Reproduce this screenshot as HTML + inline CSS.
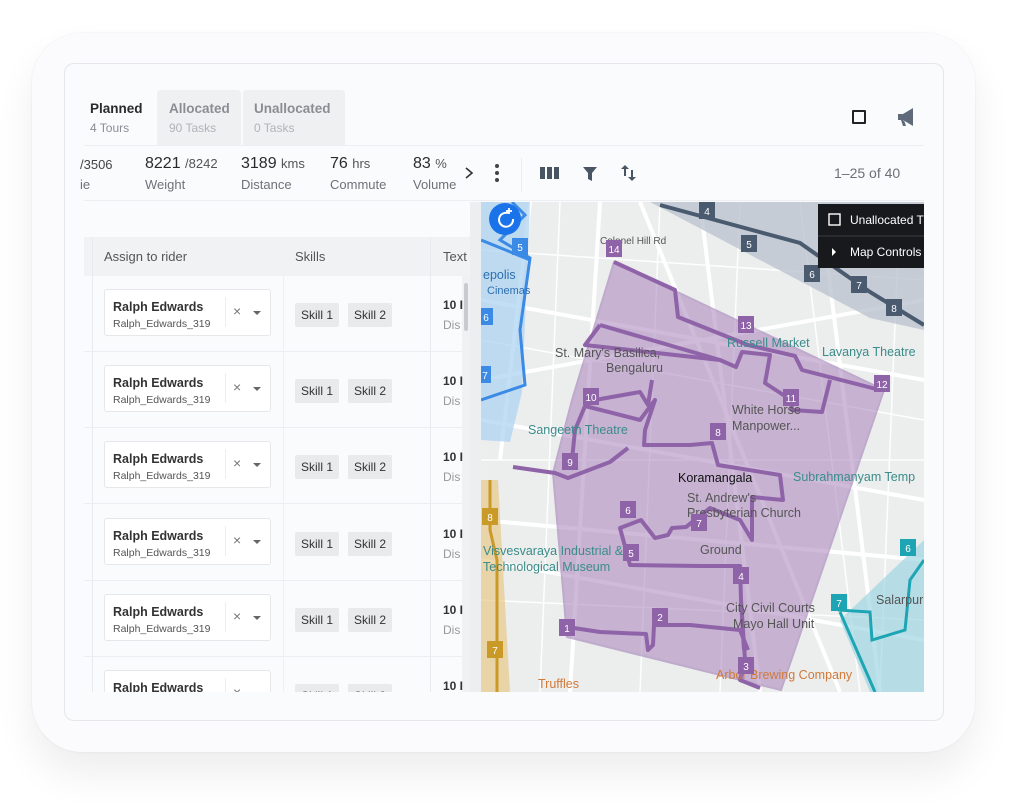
<!DOCTYPE html>
<html><head><meta charset="utf-8"><style>
*{margin:0;padding:0;box-sizing:border-box}
body{width:1024px;height:804px;background:#fff;position:relative;overflow:hidden;font-family:"Liberation Sans","DejaVu Sans",sans-serif;color:#222}
.abs{position:absolute}
.tablet{left:32px;top:33px;width:943px;height:719px;border-radius:50px;background:#fbfbfd;box-shadow:0 22px 40px rgba(0,0,0,.07),0 0 2px rgba(0,0,0,.08)}
.screen{left:64px;top:63px;width:880px;height:658px;border:1px solid #e4e6ea;border-radius:10px;background:#fafbfc;overflow:hidden}
.t1{font-size:13.5px;font-weight:bold;color:#2a2a2a}
.t2{font-size:12px;color:#8a8e94}
.val{font-size:16px;color:#2b2b2b}
.val small{font-size:13px;color:#555}
.lab{font-size:13px;color:#6d7278}
.sel{width:167px;height:47px;border:1px solid #e6e7ea;border-radius:3px;background:#fff}
.chip{height:24px;background:#e9eaec;border-radius:2px;font-size:12px;color:#333;line-height:24px;text-align:center;width:44px}
</style></head><body>
<div class="abs tablet"></div>
<div class="abs screen"></div>

<div class="abs" style="left:157px;top:90px;width:84px;height:55px;background:#eef0f2;border-radius:4px 4px 0 0"></div>
<div class="abs" style="left:243px;top:90px;width:102px;height:55px;background:#eef0f2;border-radius:4px 4px 0 0"></div>
<div class="abs t1" style="left:90px;top:101px">Planned</div>
<div class="abs t2" style="left:90px;top:121px">4 Tours</div>
<div class="abs t1" style="left:169px;top:101px;color:#8a8e94">Allocated</div>
<div class="abs t2" style="left:169px;top:121px;color:#b0b4b8">90 Tasks</div>
<div class="abs t1" style="left:254px;top:101px;color:#8a8e94">Unallocated</div>
<div class="abs t2" style="left:254px;top:121px;color:#b0b4b8">0 Tasks</div>
<div class="abs" style="left:84px;top:145px;width:840px;height:1px;background:#eceef1"></div>
<div class="abs" style="left:852px;top:110px;width:14px;height:14px;border:2px solid #222;border-radius:1px"></div>
<svg class="abs" style="left:896px;top:106px" width="22" height="22" viewBox="0 0 22 22"><path d="M2 8h5l10-6v18l-10-6H2z M5 14l2 6h3l-2-6z" fill="#5f6b7a"/></svg>

<div class="abs val" style="left:80px;top:157px;font-size:13px;color:#444">/3506</div>
<div class="abs lab" style="left:80px;top:177px">ie</div>
<div class="abs val" style="left:145px;top:155px">8221 <small>/8242</small></div>
<div class="abs lab" style="left:145px;top:177px">Weight</div>
<div class="abs val" style="left:241px;top:155px">3189 <small>kms</small></div>
<div class="abs lab" style="left:241px;top:177px">Distance</div>
<div class="abs val" style="left:330px;top:155px">76 <small>hrs</small></div>
<div class="abs lab" style="left:330px;top:177px">Commute</div>
<div class="abs val" style="left:413px;top:155px">83 <small>%</small></div>
<div class="abs lab" style="left:413px;top:177px;width:44px;overflow:hidden;white-space:nowrap">Volume</div>
<svg class="abs" style="left:462px;top:166px" width="14" height="14"><path d="M4 2l6 5-6 5" stroke="#333" stroke-width="1.6" fill="none"/></svg>
<svg class="abs" style="left:493px;top:163px" width="8" height="20"><circle cx="4" cy="3" r="2" fill="#444"/><circle cx="4" cy="10" r="2" fill="#444"/><circle cx="4" cy="17" r="2" fill="#444"/></svg>
<div class="abs" style="left:521px;top:158px;width:1px;height:34px;background:#eaecef"></div>
<svg class="abs" style="left:540px;top:167px" width="19" height="12"><rect x="0" y="0" width="5" height="12" fill="#4a5563"/><rect x="7" y="0" width="5" height="12" fill="#4a5563"/><rect x="14" y="0" width="5" height="12" fill="#4a5563"/></svg>
<svg class="abs" style="left:582px;top:166px" width="16" height="16"><path d="M1 1h14l-5 6v8l-4-2V7z" fill="#4a5563"/></svg>
<svg class="abs" style="left:620px;top:163px" width="18" height="20"><path d="M5 2l-4 4h3v7h2V6h3zM12 18l4-4h-3V7h-2v7H8z" fill="#4a5563"/></svg>
<div class="abs" style="left:834px;top:165px;font-size:14px;color:#6b7078">1–25 of 40</div>
<div class="abs" style="left:84px;top:200px;width:840px;height:1px;background:#eceef1"></div>

<div class="abs" style="left:84px;top:237px;width:386px;height:39px;background:#f1f2f4"></div>
<div class="abs" style="left:104px;top:249px;font-size:13px;color:#555">Assign to rider</div>
<div class="abs" style="left:295px;top:249px;font-size:13px;color:#555">Skills</div>
<div class="abs" style="left:443px;top:249px;font-size:13px;color:#555">Text I</div>
<div class="abs" style="left:92px;top:237px;width:1px;height:455px;background:#e8eaed"></div>
<div class="abs" style="left:283px;top:276px;width:1px;height:416px;background:#eef0f2"></div>
<div class="abs" style="left:430px;top:237px;width:1px;height:455px;background:#e8eaed"></div>
<div class="abs" style="left:462px;top:276px;width:8px;height:416px;background:#f0f1f3"></div>
<div class="abs" style="left:464px;top:283px;width:4px;height:48px;background:#c8cbcf;border-radius:2px"></div>
<div class="abs" style="left:470px;top:202px;width:11px;height:490px;background:#eceef0"></div>

<div id="rows"></div>
<script>
var h='';[276,352,428,505,581,657].forEach(function(t){
if(t+75<692)h+='<div class="abs" style="left:84px;top:'+(t+75)+'px;width:378px;height:1px;background:#eceef1"></div>';
h+='<div class="abs sel" style="left:104px;top:'+(t+13)+'px"></div>';
h+='<div class="abs" style="left:113px;top:'+(t+24)+'px;font-size:12.5px;font-weight:bold;color:#333">Ralph Edwards</div>';
h+='<div class="abs" style="left:113px;top:'+(t+42)+'px;font-size:10.5px;color:#555">Ralph_Edwards_319</div>';
h+='<div class="abs" style="left:225px;top:'+(t+21)+'px;width:1px;height:30px;background:#eee"></div>';
h+='<div class="abs" style="left:233px;top:'+(t+27)+'px;font-size:14px;color:#777">×</div>';
h+='<div class="abs" style="left:253px;top:'+(t+35)+'px;border:4px solid transparent;border-top:4px solid #666"></div>';
h+='<div class="abs chip" style="left:295px;top:'+(t+27)+'px">Skill 1</div>';
h+='<div class="abs chip" style="left:348px;top:'+(t+27)+'px">Skill 2</div>';
h+='<div class="abs" style="left:443px;top:'+(t+22)+'px;font-size:12px;font-weight:bold;color:#333">10 I</div>';
h+='<div class="abs" style="left:443px;top:'+(t+42)+'px;font-size:12px;color:#999">Dis</div>';
});document.getElementById('rows').innerHTML=h;
</script>
<div class="abs" style="left:84px;top:692px;width:400px;height:28px;background:#fafbfc"></div>

<svg class="abs" style="left:481px;top:202px" width="443" height="490" viewBox="481 202 443 490">
<rect x="481" y="202" width="443" height="490" fill="#eceded"/>
<g stroke="#fff" stroke-width="4" fill="none">
<path d="M530 202L500 460M600 202L570 692M481 300L924 380M481 420L924 500M481 560L924 640M700 202L760 692M640 202L840 692M481 380L924 300M820 202L880 692M481 520L924 560"/>
</g>
<g stroke="#fff" stroke-width="1.5" fill="none" opacity=".9">
<path d="M481 250L924 280M481 340L924 420M481 460L924 460M481 600L924 620M560 202L540 692M660 202L640 692M740 202L720 692M800 202L860 692M900 202L880 692"/>
</g>
<polygon points="650,202 924,202 924,330 870,318" fill="#b8c0cc" opacity=".75"/>
<path d="M660 205L800 243L870 292L924 325" stroke="#4a5b70" stroke-width="4" fill="none"/>
<polygon points="481,202 530,202 522,392 510,442 481,440" fill="#a9d2f2" opacity=".7"/>
<path d="M512 202L525 215L500 240L530 258L520 330L525 385L481 400M481 240L530 260" stroke="#3b8ae6" stroke-width="3" fill="none"/>
<polygon points="481,480 498,480 510,692 481,692" fill="#e8c98a" opacity=".7"/>
<path d="M490 480V530L497 560V692" stroke="#c99a27" stroke-width="3" fill="none"/>
<polygon points="924,540 840,620 870,692 924,692" fill="#9fd6e2" opacity=".7"/>
<path d="M838 610L870 612L872 640L905 630L910 580L924 560M840 612L875 692" stroke="#1ea5b3" stroke-width="3" fill="none"/>
<polygon points="614,262 884,390 781,690 567,637 553,473 572,400" fill="#a983bd" opacity=".55" stroke="#9a75b0" stroke-width="2"/>
<path d="M614 262L675 290L678 317L748 345L795 356L802 370L880 390M600 325L585 345L720 360L736 367L742 352L770 355L767 372L765 383L791 400L792 410L822 412L830 380M600 325L720 360M595 400L640 392L648 405L652 380M571 470L575 430L585 406L640 420L655 400L645 430L644 445L690 445L712 443L718 465L780 475L783 500L752 497L752 540L740 520L710 508L686 527L672 528L668 535L655 538L641 520L620 528L630 565L700 566L740 566L741 600L745 660L740 680L760 688M513 467L555 473L568 478L610 462L628 448M567 627L600 632L646 634L648 650L653 645L654 625L690 625L740 630L748 650M741 600L744 650" stroke="#8f63a8" stroke-width="4" fill="none" stroke-linejoin="round"/>
<g font-family="Liberation Sans,sans-serif" font-size="12.5" fill="#555">
<text x="555" y="357">St. Mary's Basilica,</text><text x="606" y="372">Bengaluru</text>
<text x="678" y="482" fill="#111">Koramangala</text>
<text x="732" y="414">White Horse</text><text x="732" y="430">Manpower...</text>
<text x="687" y="502">St. Andrew's</text><text x="687" y="517">Presbyterian Church</text>
<text x="700" y="554">Ground</text>
<text x="726" y="612">City Civil Courts</text><text x="733" y="628">Mayo Hall Unit</text>
<text x="793" y="481" fill="#3a8c8a">Subrahmanyam Temp</text>
<text x="822" y="356" fill="#3a8c8a">Lavanya Theatre</text>
<text x="727" y="347" fill="#3a8c8a">Russell Market</text>
<text x="528" y="434" fill="#3a8c8a">Sangeeth Theatre</text>
<text x="483" y="555" fill="#3a8c8a">Visvesvaraya Industrial &amp;</text><text x="483" y="571" fill="#3a8c8a">Technological Museum</text>
<text x="483" y="279" fill="#2d6fb0">epolis</text><text x="487" y="294" fill="#2d6fb0" font-size="11">Cinemas</text>
<text x="716" y="679" fill="#d07a3a">Arbor Brewing Company</text>
<text x="538" y="688" fill="#d07a3a">Truffles</text>
<text x="876" y="604">Salarpur</text>
<text x="600" y="244" font-size="10">Colonel Hill Rd</text>
</g>
<g font-family="Liberation Sans,sans-serif" font-size="10" fill="#fff" text-anchor="middle">
<g fill="#8f63a8"><rect x="606" y="240" width="16" height="17"/><rect x="738" y="316" width="16" height="17"/><rect x="874" y="375" width="16" height="17"/><rect x="783" y="389" width="16" height="17"/><rect x="583" y="388" width="16" height="17"/><rect x="710" y="423" width="16" height="17"/><rect x="562" y="453" width="16" height="17"/><rect x="620" y="501" width="16" height="17"/><rect x="691" y="514" width="16" height="17"/><rect x="623" y="544" width="16" height="17"/><rect x="733" y="567" width="16" height="17"/><rect x="652" y="608" width="16" height="17"/><rect x="559" y="619" width="16" height="17"/><rect x="738" y="657" width="16" height="17"/></g>
<g fill="#4a5b70"><rect x="699" y="202" width="16" height="17"/><rect x="741" y="235" width="16" height="17"/><rect x="804" y="265" width="16" height="17"/><rect x="851" y="276" width="16" height="17"/><rect x="886" y="299" width="16" height="17"/></g>
<g fill="#3b8ae6"><rect x="512" y="238" width="16" height="17"/><rect x="481" y="308" width="12" height="17"/><rect x="481" y="366" width="10" height="17"/></g>
<g fill="#c99a27"><rect x="482" y="508" width="16" height="17"/><rect x="487" y="641" width="16" height="17"/></g>
<g fill="#1ea5b3"><rect x="900" y="539" width="16" height="17"/><rect x="831" y="594" width="16" height="17"/></g>
<text x="614" y="253">14</text><text x="746" y="329">13</text><text x="882" y="388">12</text><text x="791" y="402">11</text><text x="591" y="401">10</text><text x="718" y="436">8</text><text x="570" y="466">9</text><text x="628" y="514">6</text><text x="699" y="527">7</text><text x="631" y="557">5</text><text x="741" y="580">4</text><text x="660" y="621">2</text><text x="567" y="632">1</text><text x="746" y="670">3</text>
<text x="707" y="215">4</text><text x="749" y="248">5</text><text x="812" y="278">6</text><text x="859" y="289">7</text><text x="894" y="312">8</text>
<text x="520" y="251">5</text><text x="486" y="321">6</text><text x="485" y="379">7</text><text x="490" y="521">8</text><text x="495" y="654">7</text><text x="908" y="552">6</text><text x="839" y="607">7</text>
</g>
<circle cx="505" cy="219" r="16" fill="#1a73e8"/>
<path d="M508 213a7 7 0 1 0 5 6" stroke="#fff" stroke-width="2" fill="none"/><path d="M509 208v6M506 211h6" stroke="#fff" stroke-width="1.8"/>
<rect x="818" y="204" width="106" height="64" fill="#17191c"/>
<line x1="818" y1="236" x2="924" y2="236" stroke="#3a3d42"/>
<rect x="829" y="214" width="11" height="11" fill="none" stroke="#fff" stroke-width="1.4"/>
<text x="850" y="224" fill="#fff" font-family="Liberation Sans,sans-serif" font-size="12">Unallocated T</text>
<path d="M832 248l4 4-4 4z" fill="#fff"/>
<text x="850" y="256" fill="#fff" font-family="Liberation Sans,sans-serif" font-size="12">Map Controls</text>
</svg>
</body></html>
